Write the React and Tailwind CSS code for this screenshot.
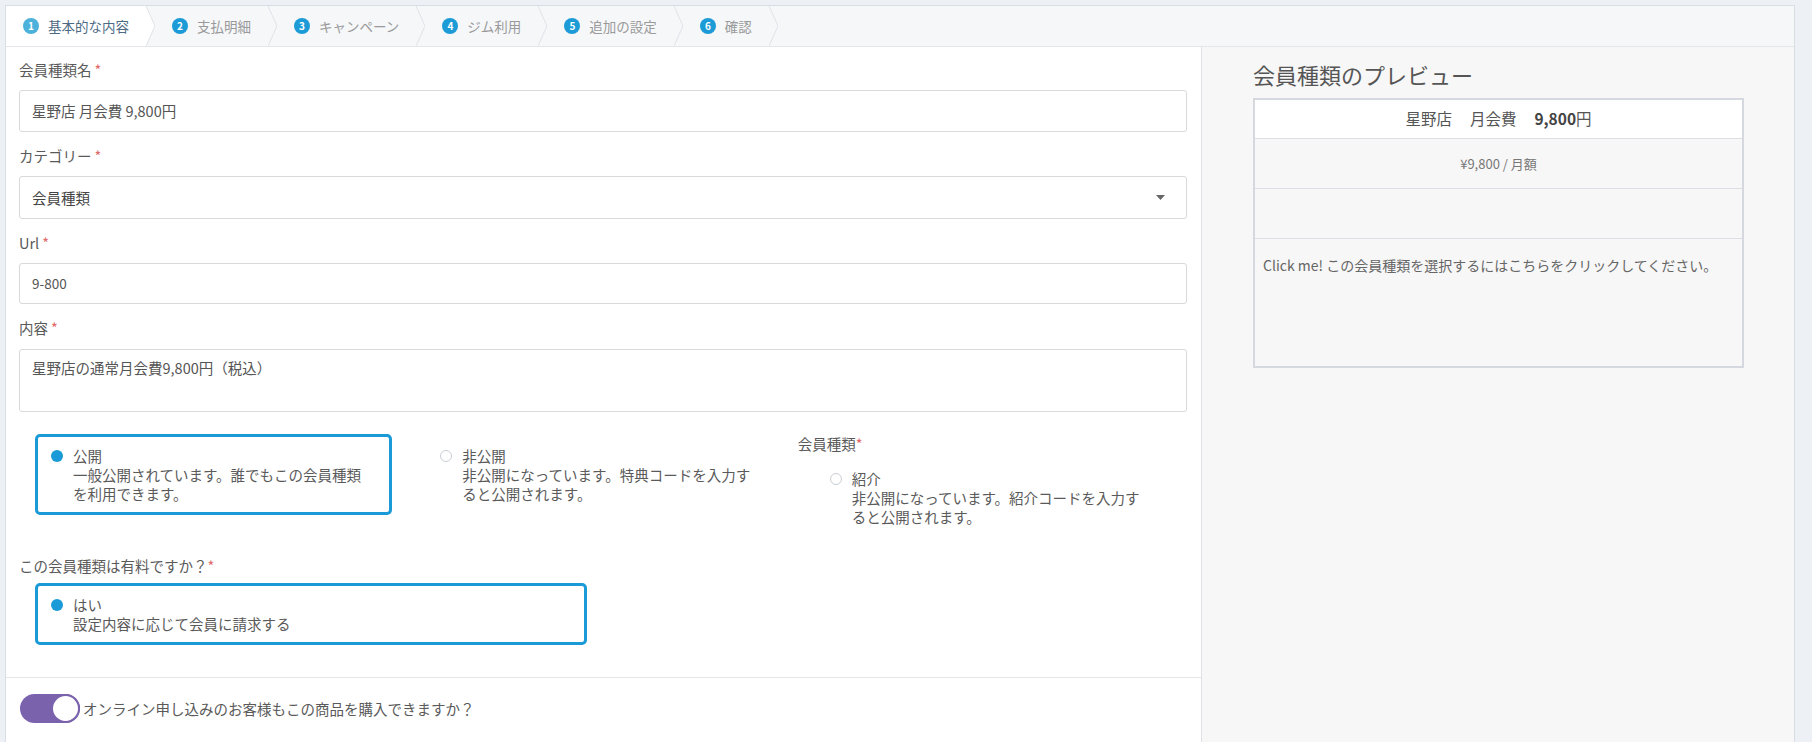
const tabs = ["基本的な内容", "支払明細", "キャンペーン", "ジム利用", "追加の設定", "確認"];

const Chevron = ({ active }) => {
  return (
    <svg width="9" height="40" viewBox="0 0 9 40" className="block shrink-0">
      {active && <polygon points="0,0 9,20 0,40" fill="#ffffff" />}
      <polyline points="0,0 9,20 0,40" fill="none" stroke="#dfe3e8" strokeWidth="1" />
    </svg>
  );
};

const Req = () => <span className="text-[#e06a6a] ml-[3px]">*</span>;

const Label = ({ children, className = "" }) => (
  <div className={"h-[20px] leading-[20px] text-[14.5px] text-[#5a5a5a] " + className}>{children}</div>
);

const Option = ({ checked, bordered, title, desc, className = "" }) => (
  <div
    className={
      "flex gap-[10px] rounded-[5px] border-[3px] pl-[13px] py-[9px] " +
      (bordered ? "border-[#1a9ad6] " : "border-transparent ") +
      className
    }
  >
    {checked ? (
      <span className="mt-[4px] w-[12px] h-[12px] rounded-full bg-[#1a9ad6] shrink-0" />
    ) : (
      <span className="mt-[4px] w-[12px] h-[12px] rounded-full border border-[#c9cdd3] bg-white shrink-0" />
    )}
    <div className="text-[14.5px] leading-[19px] text-[#5a5a5a] w-[296px]">
      <div>{title}</div>
      <div>{desc}</div>
    </div>
  </div>
);

export default function App() {
  return (
    <div className="h-[742px] overflow-hidden bg-[#edf1f6] pl-[5px] pr-[17px] pt-[5px] font-['Noto_Sans_CJK_JP','Noto_Sans',sans-serif]">
      <div className="h-[737px] border border-b-0 border-[#d8dee5] bg-white flex flex-col">
        {/* steps */}
        <div className="h-[41px] shrink-0 bg-[#f5f7f9] border-b border-[#e3e7eb] flex">
          {tabs.map((t, i) => (
            <div key={t} className="flex h-[40px]">
              <div
                className={
                  "flex items-center gap-[9px] pl-[17px] pr-[17px] " + (i === 0 ? "bg-white" : "")
                }
              >
                <span
                  className={
                    "w-[16px] h-[16px] rounded-full flex items-center justify-center text-white text-[10px] font-bold leading-none " +
                    (i === 0 ? "bg-[#4cb2db]" : "bg-[#1d9bd6]")
                  }
                >
                  {i + 1}
                </span>
                <span
                  className={
                    "text-[13.5px] leading-[20px] " + (i === 0 ? "text-[#4d6a84]" : "text-[#9a9a9a]")
                  }
                >
                  {t}
                </span>
              </div>
              <Chevron active={i === 0} />
            </div>
          ))}
        </div>

        <div className="flex flex-1 min-h-0">
          {/* form */}
          <div className="w-[1196px] shrink-0 border-r border-[#dde1e6] flex flex-col">
            <div className="pl-[13px] pr-[14px] pt-[13px]">
              <Label>
                会員種類名<Req />
              </Label>
              <div className="mt-[10px] h-[42px] border border-[#d9d9d9] rounded-[3px] px-[12px] flex items-center text-[14.5px] text-[#555]">
                星野店 月会費 9,800円
              </div>

              <Label className="mt-[14px]">
                カテゴリー<Req />
              </Label>
              <div className="mt-[10px] h-[43px] border border-[#d9d9d9] rounded-[3px] pl-[12px] pr-[21px] flex items-center justify-between text-[14.5px] text-[#444]">
                <span>会員種類</span>
                <svg width="9" height="5" viewBox="0 0 9 5">
                  <polygon points="0,0 9,0 4.5,5" fill="#666" />
                </svg>
              </div>

              <Label className="mt-[14px]">
                Url<Req />
              </Label>
              <div className="mt-[10px] h-[41px] border border-[#d9d9d9] rounded-[3px] px-[12px] flex items-center text-[13.5px] text-[#555]">
                9-800
              </div>

              <Label className="mt-[14px]">
                内容<Req />
              </Label>
              <div className="mt-[11px] h-[63px] border border-[#d9d9d9] rounded-[3px] px-[12px] pt-[8px] text-[14.5px] leading-[20px] text-[#555]">
                星野店の通常月会費9,800円（税込）
              </div>

              <div className="mt-[22px] grid grid-cols-3 items-start">
                <Option
                  checked
                  bordered
                  className="mx-[16px]"
                  title="公開"
                  desc="一般公開されています。誰でもこの会員種類を利用できます。"
                />
                <Option
                  className="mx-[16px]"
                  title="非公開"
                  desc="非公開になっています。特典コードを入力すると公開されます。"
                />
                <div>
                  <Label>
                    会員種類<span className="text-[#e06a6a]">*</span>
                  </Label>
                  <Option
                    className="mx-[16px] mt-[3px]"
                    title="紹介"
                    desc="非公開になっています。紹介コードを入力すると公開されます。"
                  />
                </div>
              </div>

              <Label className="mt-[18px]">
                この会員種類は有料ですか？<span className="text-[#e06a6a]">*</span>
              </Label>
              <Option
                checked
                bordered
                className="ml-[16px] mt-[7px] w-[552px]"
                title="はい"
                desc="設定内容に応じて会員に請求する"
              />
            </div>

            <div className="mt-[32px] border-t border-[#e6e6e6] pl-[14px] pt-[16px] flex items-center gap-[3px]">
              <div className="w-[60px] h-[29px] rounded-full bg-[#7a62ad] flex justify-end">
                <span className="w-[29px] h-[29px] rounded-full bg-white border-2 border-[#7a62ad]" />
              </div>
              <span className="text-[14.5px] text-[#5a5a5a] leading-[20px]">
                オンライン申し込みのお客様もこの商品を購入できますか？
              </span>
            </div>
          </div>

          {/* preview */}
          <div className="flex-1 bg-[#f7f7f7] pl-[51px] pt-[12px]">
            <div className="text-[22px] leading-[30px] text-[#555]">会員種類のプレビュー</div>
            <div className="mt-[9px] w-[491px] border-2 border-[#d5d9df]">
              <div className="h-[38px] bg-white flex items-center justify-center gap-[18px] text-[15.5px] text-[#555]">
                <span>星野店</span>
                <span>月会費</span>
                <span>
                  <b className="font-bold text-[#444]">9,800</b>円
                </span>
              </div>
              <div className="h-[50px] border-t border-[#dcdfe4] flex items-center justify-center text-[13px] text-[#777]">
                ¥9,800 / 月額
              </div>
              <div className="h-[50px] border-t border-[#dcdfe4]" />
              <div className="h-[128px] border-t border-[#dcdfe4] px-[8px] pt-[16px] text-[14px] leading-[20px] text-[#666]">
                Click me! この会員種類を選択するにはこちらをクリックしてください。
              </div>
            </div>
          </div>
        </div>
      </div>
    </div>
  );
}
